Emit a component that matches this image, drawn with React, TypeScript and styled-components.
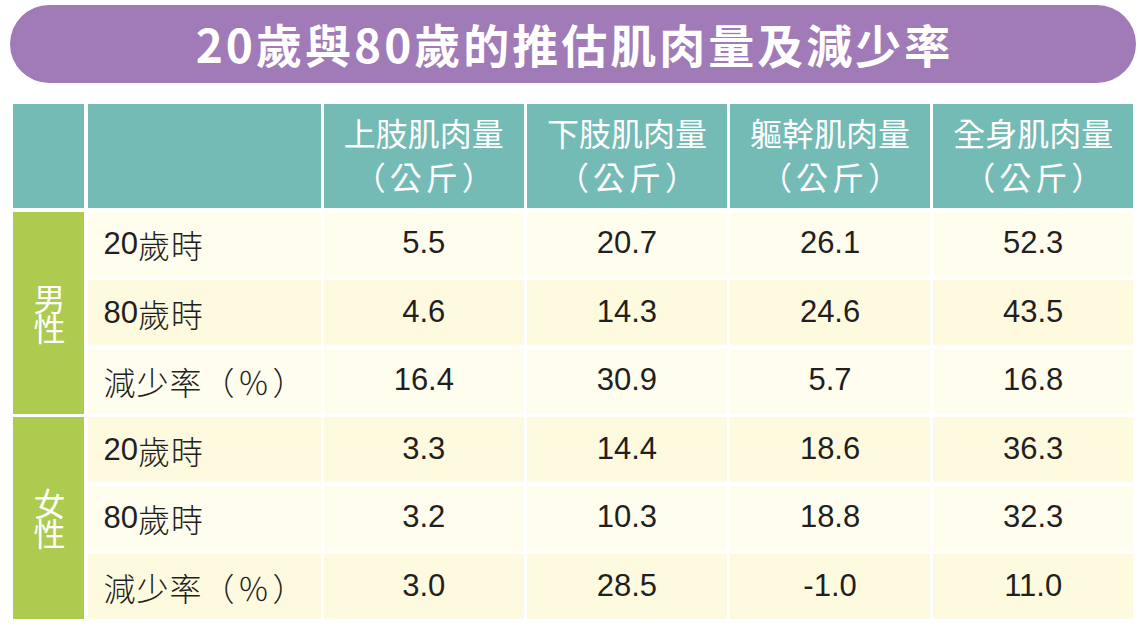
import React from "react";
import styled, { createGlobalStyle } from "styled-components";

const Global = createGlobalStyle`
  html, body { margin: 0; padding: 0; background: #ffffff; }
  body { width: 1145px; height: 626px; overflow: hidden; }
`;

const Page = styled.div`
  display: flex;
  flex-direction: column;
  padding: 5px 0 0 10px;
  width: 1126px;
`;

const TitleBar = styled.div`
  height: 78px;
  width: 1126px;
  border-radius: 39px;
  background: #a07bb7;
  display: flex;
  align-items: center;
  justify-content: center;
  color: #ffffff;
  font-family: "Noto Sans CJK TC", "Noto Sans", sans-serif;
  font-weight: 700;
  font-size: 46px;
  letter-spacing: 3px;
  padding: 0 0 2px 3px;
  box-sizing: border-box;
`;

const Table = styled.div`
  margin: 21px 0 0 3px;
  width: 1120px;
  display: grid;
  grid-template-columns: 71px 233px repeat(4, 1fr);
  grid-template-rows: 104px repeat(6, 65px);
  gap: 3.5px 3.5px;
`;

const HeadCell = styled.div`
  background: #74bab5;
  color: #ffffff;
  font-family: "Noto Sans CJK TC", sans-serif;
  font-weight: 400;
  font-size: 32px;
  line-height: 44px;
  display: flex;
  flex-direction: column;
  align-items: center;
  justify-content: center;
  text-align: center;
  padding-bottom: 4px;
  box-sizing: border-box;
`;

const Unit = styled.span`
  letter-spacing: 4px;
  margin-right: -4px;
`;

const GenderCell = styled.div<{ $span: number }>`
  grid-row: span ${(p) => p.$span};
  background: #adcb4e;
  color: #ffffff;
  font-family: "Noto Sans CJK TC", sans-serif;
  font-size: 32px;
  display: flex;
  align-items: center;
  justify-content: center;
  padding-left: 2px;
`;

const GenderText = styled.span`
  writing-mode: vertical-rl;
  text-orientation: upright;
  line-height: 32px;
  letter-spacing: -2px;
`;

const Cell = styled.div<{ $shade: boolean }>`
  background: ${(p) => (p.$shade ? "#fefadf" : "#fffdee")};
  color: #231f20;
  font-family: "Liberation Sans", "Noto Sans CJK TC", sans-serif;
  font-size: 31px;
  display: flex;
  align-items: center;
`;

const LabelCell = styled(Cell)`
  grid-column: 2;
  padding-left: 16px;
  font-weight: 400;
`;

const LabelCJK = styled.span`
  font-family: "Noto Sans CJK TC", sans-serif;
  font-weight: 300;
  font-size: 32px;
  letter-spacing: 1px;
`;

const Percent = styled.span`
  font-family: "Noto Sans CJK TC", sans-serif;
  font-weight: 300;
  font-size: 32px;
  letter-spacing: 3px;
`;

const ValueCell = styled(Cell)`
  justify-content: center;
  padding-bottom: 2px;
`;

const headers = ["上肢肌肉量", "下肢肌肉量", "軀幹肌肉量", "全身肌肉量"];

type Row = { num?: string; label: string; unit?: string; values: string[] };

const groups: { gender: string; rows: Row[] }[] = [
  {
    gender: "男性",
    rows: [
      { num: "20", label: "歲時", values: ["5.5", "20.7", "26.1", "52.3"] },
      { num: "80", label: "歲時", values: ["4.6", "14.3", "24.6", "43.5"] },
      { label: "減少率", unit: "（％）", values: ["16.4", "30.9", "5.7", "16.8"] },
    ],
  },
  {
    gender: "女性",
    rows: [
      { num: "20", label: "歲時", values: ["3.3", "14.4", "18.6", "36.3"] },
      { num: "80", label: "歲時", values: ["3.2", "10.3", "18.8", "32.3"] },
      { label: "減少率", unit: "（％）", values: ["3.0", "28.5", "-1.0", "11.0"] },
    ],
  },
];

export default function App() {
  let rowIndex = 0;
  return (
    <>
      <Global />
      <Page>
        <TitleBar>20歲與80歲的推估肌肉量及減少率</TitleBar>
        <Table>
          <HeadCell />
          <HeadCell />
          {headers.map((h) => (
            <HeadCell key={h}>
              <span>{h}</span>
              <Unit>（公斤）</Unit>
            </HeadCell>
          ))}
          {groups.map((g) => (
            <React.Fragment key={g.gender}>
              <GenderCell $span={g.rows.length}>
                <GenderText>{g.gender}</GenderText>
              </GenderCell>
              {g.rows.map((r, i) => {
                const shade = rowIndex++ % 2 === 1;
                return (
                  <React.Fragment key={i}>
                    <LabelCell $shade={shade}>
                      {r.num}
                      <LabelCJK>{r.label}</LabelCJK>
                      {r.unit && <Percent>{r.unit}</Percent>}
                    </LabelCell>
                    {r.values.map((v, j) => (
                      <ValueCell key={j} $shade={shade}>
                        {v}
                      </ValueCell>
                    ))}
                  </React.Fragment>
                );
              })}
            </React.Fragment>
          ))}
        </Table>
      </Page>
    </>
  );
}
